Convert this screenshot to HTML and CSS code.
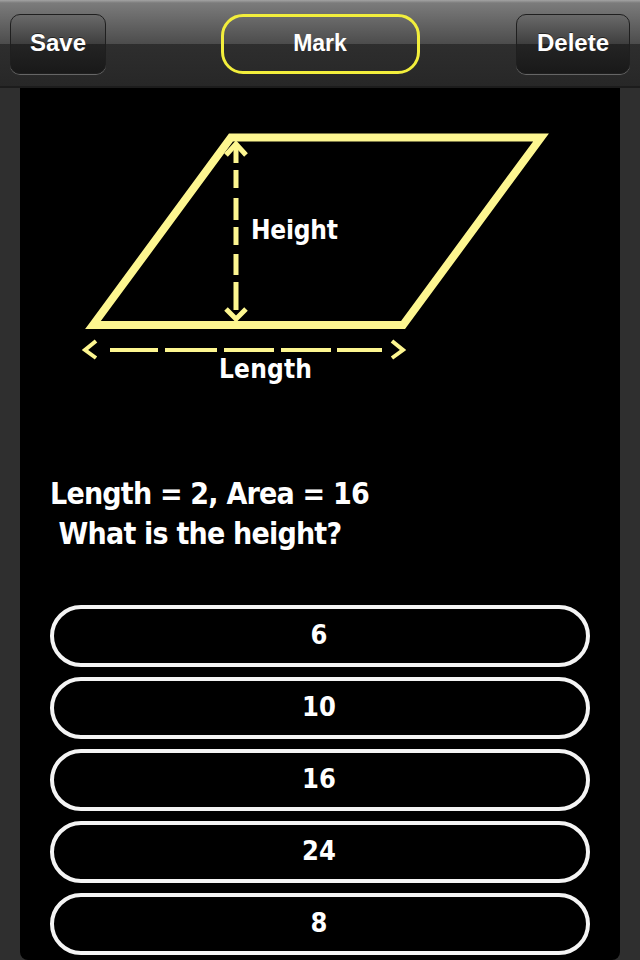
FILE: index.html
```html
<!DOCTYPE html>
<html lang="en">
<head>
    <meta charset="UTF-8">
    <meta name="viewport" content="width=device-width, initial-scale=1.0">
    <title>Quiz question</title>
    <link rel="stylesheet" href="styles.css">
</head>
<body>

<div class="toolbar">
    <button class="bar-btn save-btn">Save</button>
    <button class="mark-btn">Mark</button>
    <button class="bar-btn delete-btn">Delete</button>
</div>

<div class="panel">
    <svg class="diagram" viewBox="20 88 600 360" width="600" height="360">
        <polygon class="shape" points="93,325 231,137.500 541,137.500 403,325"/>
        <!-- height arrow -->
        <path class="dash" d="M236 145V163M236 170V188M236 198V220M236 227V245M236 254V275M236 282V310"/>
        <path class="head" d="M226 155L236 144L246 155M226 309L236 319L246 309"/>
        <!-- length arrow -->
        <path class="dash thin" d="M110 350H158M165 350H217M224 350H274M281 350H331M337 350H382"/>
        <path class="head thin" d="M96 341L85 350L96 358M392 341L403 350L392 358"/>
        <text class="label" x="251" y="239" textLength="87">Height</text>
        <text class="label" x="219" y="378" textLength="93">Length</text>
    </svg>

    <p class="question">Length = 2, Area = 16
 What is the height?</p>

    <div class="answers">
        <div class="answer">6</div>
        <div class="answer">10</div>
        <div class="answer">16</div>
        <div class="answer">24</div>
        <div class="answer">8</div>
    </div>
</div>

</body>
</html>
```

FILE: styles.css
```css
html, body {
    margin: 0;
    height: 960px;
    overflow: hidden;
}
body {
    background-color: #2f2f2f;
    font-family: "Liberation Sans", Arial, sans-serif;
}
.toolbar {
    height: 88px;
    box-sizing: border-box;
    padding: 14px 10px 0;
    display: grid;
    grid-template-columns: 1fr 199px 1fr;
    align-items: start;
    background: linear-gradient(#a3a3a3 0, #7b7b7b 3px, #4c4c4c 44px, #2e2e2e 44px, #272727 86px);
    border-bottom: 2px solid #1c1c1c;
}
.bar-btn, .mark-btn {
    height: 60px;
    color: white;
    font-family: inherit;
    font-weight: bold;
    padding: 0 0 2px;
}
.bar-btn {
    font-size: 24px;
    border-radius: 10px;
    border: 1px solid #1f1f1f;
    box-shadow: 0 1px 0 #666;
    background: linear-gradient(#6a6a6a 0, #3e3e3e 29px, #242424 29px, #191919 100%);
    text-shadow: 0 -1px 0 rgba(0,0,0,0.5);
}
.save-btn {
    width: 96px;
    justify-self: start;
}
.delete-btn {
    width: 114px;
    justify-self: end;
}
.mark-btn {
    font-size: 23px;
    border: 3px solid #f2ee3c;
    border-radius: 22px;
    background: transparent;
}
.panel {
    margin: 0 20px;
    height: 872px;
    box-sizing: border-box;
    background: black;
    border-radius: 0 0 8px 8px;
    color: white;
    overflow: hidden;
}
.diagram {
    display: block;
}
.shape {
    fill: none;
    stroke: #fdf690;
    stroke-width: 8;
    stroke-linejoin: miter;
}
.dash, .head {
    fill: none;
    stroke: #fdf690;
    stroke-width: 5;
}
.thin {
    stroke-width: 4;
}
.label {
    fill: white;
    font-family: "DejaVu Sans Condensed", "DejaVu Sans", sans-serif;
    font-weight: bold;
    font-size: 26px;
}
.question {
    margin: 26px 0 0 30px;
    height: 96px;
    font-family: "DejaVu Sans Condensed", "DejaVu Sans", sans-serif;
    font-weight: bold;
    font-size: 30px;
    letter-spacing: -0.8px;
    line-height: 40px;
    white-space: pre;
}
.answers {
    margin: 35px 30px 0;
    display: flex;
    flex-direction: column;
    gap: 10px;
}
.answer {
    height: 62px;
    box-sizing: border-box;
    padding: 0 2px 3px 0;
    border: 4px solid #f4f4f4;
    border-radius: 31px;
    display: flex;
    align-items: center;
    justify-content: center;
    font-family: "DejaVu Sans Condensed", "DejaVu Sans", sans-serif;
    font-weight: bold;
    font-size: 27px;
}
```
